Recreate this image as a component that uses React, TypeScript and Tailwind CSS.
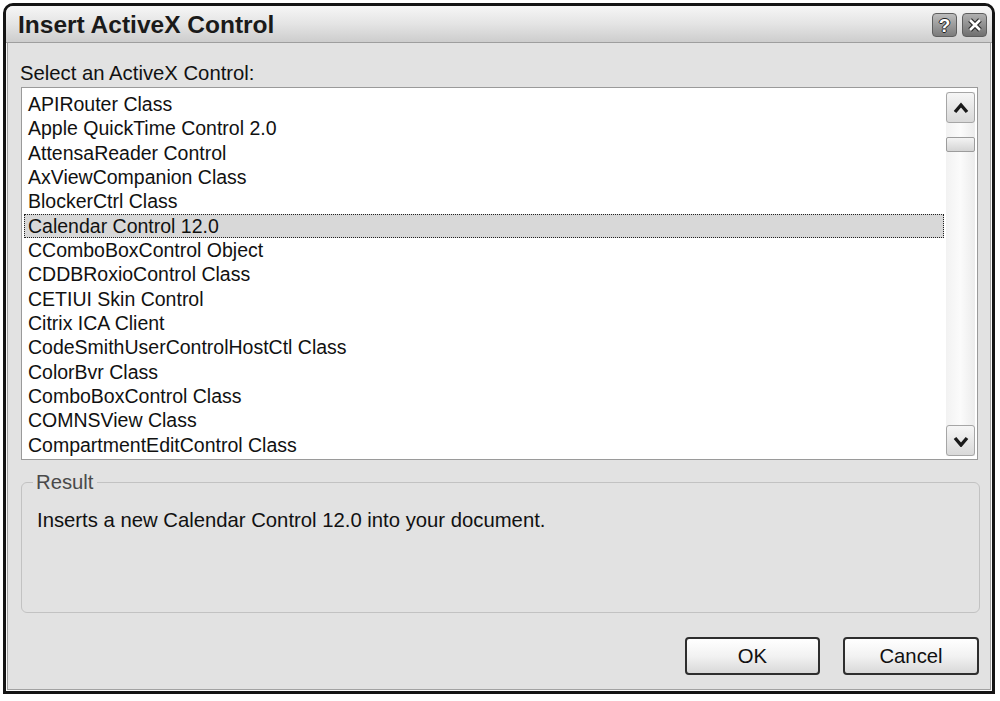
import React from "react";

const items = [
  "APIRouter Class",
  "Apple QuickTime Control 2.0",
  "AttensaReader Control",
  "AxViewCompanion Class",
  "BlockerCtrl Class",
  "Calendar Control 12.0",
  "CComboBoxControl Object",
  "CDDBRoxioControl Class",
  "CETIUI Skin Control",
  "Citrix ICA Client",
  "CodeSmithUserControlHostCtl Class",
  "ColorBvr Class",
  "ComboBoxControl Class",
  "COMNSView Class",
  "CompartmentEditControl Class",
];

const font = { fontFamily: '"Liberation Sans", Arial, sans-serif' };

function Chevron({ up }: { up: boolean }) {
  return (
    <svg width="16" height="12" viewBox="0 0 16 12">
      <path
        d={up ? "M2 10 L8 3 L14 10" : "M2 3 L8 10 L14 3"}
        fill="none"
        stroke="#1a1a1a"
        strokeWidth="3.4"
        strokeLinejoin="miter"
      />
    </svg>
  );
}

export default function App() {
  return (
    <div
      className="w-[1000px] h-[701px] bg-white pt-[3px] pl-[3px] pr-[5px] pb-[7px] text-[#111]"
      style={font}
    >
      <div className="h-full border-[3px] border-[#141414] rounded-t-[10px] bg-[#e2e2e2] flex flex-col overflow-hidden">
        {/* Title bar */}
        <div className="h-[37px] shrink-0 flex items-center justify-between pl-[12px] pr-[3px] bg-gradient-to-b from-[#f6f6f6] via-[#e4e4e4] to-[#cdcdcd] border-b border-[#9e9e9e]">
          <div className="text-[24.5px] font-bold text-[#1a1a1a] leading-none mt-[2px]">
            Insert ActiveX Control
          </div>
          <div className="flex gap-[5px] mt-[2px] mr-[2px]">
            <div className="w-[25px] h-[24px] rounded-[4px] border border-[#5e5e5e] bg-gradient-to-b from-[#bdbdbd] to-[#7c7c7c] flex items-center justify-center">
              <span
                className="text-white font-bold text-[19px] leading-none"
                style={{
                  textShadow:
                    "1px 0 0 #222, -1px 0 0 #222, 0 1px 0 #222, 0 -1px 0 #222",
                }}
              >
                ?
              </span>
            </div>
            <div className="w-[25px] h-[24px] rounded-[4px] border border-[#5e5e5e] bg-gradient-to-b from-[#b0b0b0] to-[#707070] flex items-center justify-center">
              <svg width="16" height="16" viewBox="0 0 16 16">
                <path d="M3 3 L13 13 M13 3 L3 13" stroke="#2a2a2a" strokeWidth="5" />
                <path d="M3 3 L13 13 M13 3 L3 13" stroke="#ffffff" strokeWidth="2.6" />
              </svg>
            </div>
          </div>
        </div>

        {/* Body */}
        <div className="flex-1 border-x border-b border-[#fafafa]">
          <div className="h-full border-x border-b border-[#a2a2a2] flex flex-col pl-[12px] pr-[11px]">
            <div className="mt-[19px] h-[22px] leading-[22px] text-[20.3px]">
              Select an ActiveX Control:
            </div>
            <div className="mt-[3px] h-[373px] bg-white border border-[#9a9a9a] flex pl-[2px] pt-[4px] pb-[2px] pr-[2px] ml-[1px] mr-[1px]">
              <div className="flex-1 flex flex-col">
                {items.map((it, i) => (
                  <div
                    key={it}
                    className={
                      "h-[24.45px] leading-[24px] text-[19.5px] pl-[4px] whitespace-nowrap " +
                      (i === 5
                        ? "bg-[#d8d8d8] outline outline-1 outline-dotted outline-[#222] -outline-offset-1"
                        : "")
                    }
                  >
                    {it}
                  </div>
                ))}
              </div>
              <div className="w-[29px] ml-[2px] h-[364px] flex flex-col bg-gradient-to-r from-[#f2f2f2] via-[#fbfbfb] to-[#ececec]">
                <div className="h-[31px] rounded-[3px] border border-[#a6a6a6] bg-gradient-to-b from-[#f6f6f6] to-[#d9d9d9] flex items-center justify-center">
                  <Chevron up />
                </div>
                <div className="mt-[14px] h-[15px] rounded-[2px] border border-[#9c9c9c] bg-gradient-to-b from-[#f4f4f4] to-[#d4d4d4]" />
                <div className="flex-1" />
                <div className="h-[31px] rounded-[3px] border border-[#a6a6a6] bg-gradient-to-b from-[#f6f6f6] to-[#d9d9d9] flex items-center justify-center">
                  <Chevron up={false} />
                </div>
              </div>
            </div>

            {/* Result group */}
            <div className="relative mt-[22px] h-[131px] border border-[#c2c2c2] rounded-[6px] pl-[15px] pt-[26px] mr-[-1px] ml-[1px]">
              <div className="absolute -top-[12px] left-[11px] px-[3px] bg-[#e2e2e2] text-[20.3px] leading-[22px] text-[#4a4a4a]">
                Result
              </div>
              <div className="text-[20.3px] leading-[22px]">
                Inserts a new Calendar Control 12.0 into your document.
              </div>
            </div>

            {/* Buttons */}
            <div className="mt-[24px] flex justify-end gap-[23px]">
              <div className="w-[135px] h-[38px] rounded-[4px] border-2 border-[#2e2e2e] bg-gradient-to-b from-[#ffffff] via-[#f2f2f2] to-[#d9d9d9] flex items-center justify-center text-[20.3px]">
                OK
              </div>
              <div className="w-[136px] h-[38px] rounded-[4px] border-2 border-[#2e2e2e] bg-gradient-to-b from-[#ffffff] via-[#f2f2f2] to-[#d9d9d9] flex items-center justify-center text-[20.3px]">
                Cancel
              </div>
            </div>
          </div>
        </div>
      </div>
    </div>
  );
}
